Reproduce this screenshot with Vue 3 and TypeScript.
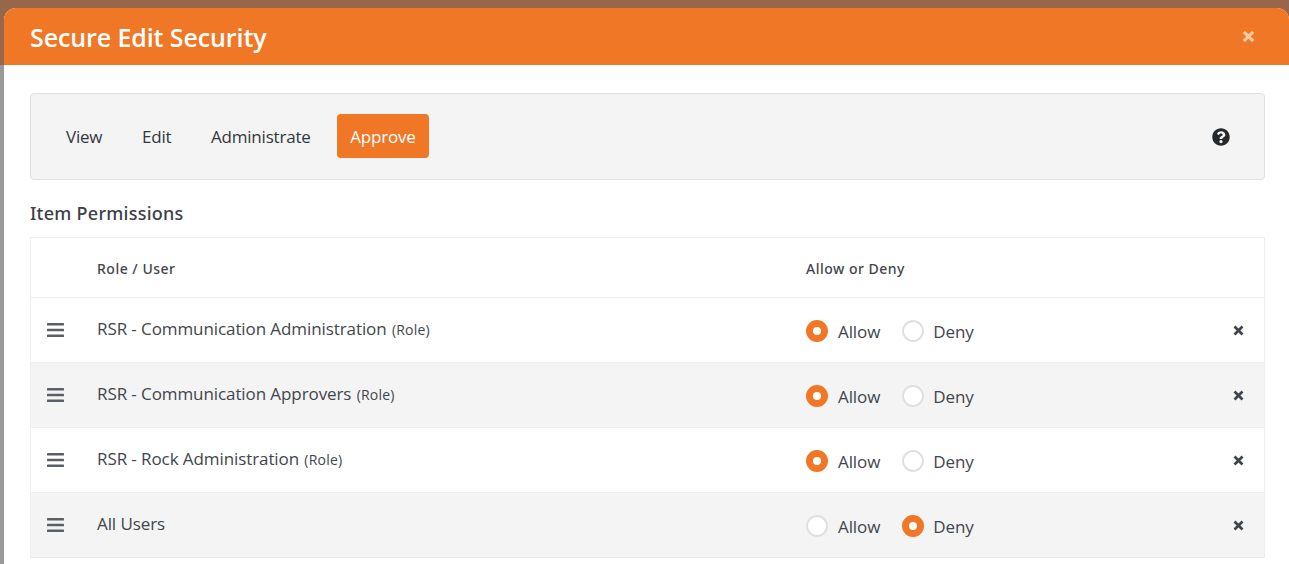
<script setup lang="ts">
interface Row { name: string; role: boolean; allow: boolean }
const rows: Row[] = [
  { name: 'RSR - Communication Administration', role: true, allow: true },
  { name: 'RSR - Communication Approvers', role: true, allow: true },
  { name: 'RSR - Rock Administration', role: true, allow: true },
  { name: 'All Users', role: false, allow: false },
]
const tabs = ['View', 'Edit', 'Administrate', 'Approve']
</script>

<template>
  <div class="page">
    <div class="modal">
      <header class="head">
        <h1>Secure Edit Security</h1>
        <svg class="close" viewBox="0 0 13 13" width="13" height="13">
          <path d="M1.800 1.800 11.200 11.200M11.200 1.800 1.800 11.200" stroke="#f9c9a6" stroke-width="3.200" fill="none" />
        </svg>
      </header>
      <div class="body">
        <div class="panel">
          <nav class="tabs">
            <span v-for="t in tabs" :key="t" class="tab" :class="{ on: t === 'Approve' }">{{ t }}</span>
          </nav>
          <svg class="help" viewBox="0 0 512 512" width="18" height="18">
            <path fill="#24292e" d="M504 256c0 137-111 248-248 248S8 393 8 256 119 8 256 8s248 111 248 248zM262.700 90c-54.500 0-89.300 23-116.500 63.800-3.500 5.300-2.400 12.400 2.700 16.300l34.700 26.300c5.200 3.900 12.600 3 16.700-2.100 17.900-22.700 30.200-35.800 57.300-35.800 20.400 0 45.700 13.100 45.700 33 0 15-12.400 22.700-32.600 34-23.600 13.200-54.800 29.700-54.800 70.900V302c0 6.600 5.400 12 12 12h56c6.600 0 12-5.400 12-12v-1.300c0-28.600 83.500-29.800 83.500-107.200C380 135.200 319.500 90 262.700 90zM256 339c-25.400 0-46 20.600-46 46s20.600 46 46 46 46-20.600 46-46-20.600-46-46-46z"/>
          </svg>
        </div>
        <h2 class="title">Item Permissions</h2>
        <div class="table">
          <div class="row hdr">
            <span class="grip-col"></span>
            <span class="name">Role / User</span>
            <span class="choice">Allow or Deny</span>
          </div>
          <div v-for="r in rows" :key="r.name" class="row item">
            <span class="grip-col">
              <svg class="grip" viewBox="0 0 17 14" width="17" height="14">
                <rect x="0" y="0" width="17" height="2.500" rx=".6" />
                <rect x="0" y="5.750" width="17" height="2.500" rx=".6" />
                <rect x="0" y="11.500" width="17" height="2.500" rx=".6" />
              </svg>
            </span>
            <span class="name">{{ r.name }} <small v-if="r.role">(Role)</small></span>
            <span class="choice radios">
              <span class="radio"><i :class="{ sel: r.allow }"></i>Allow</span>
              <span class="radio"><i :class="{ sel: !r.allow }"></i>Deny</span>
            </span>
            <svg class="del" viewBox="0 0 11 11" width="11" height="11">
              <path d="M1.500 1.500 9.500 9.500M9.500 1.500 1.500 9.500" stroke="#3f434a" stroke-width="2.700" fill="none" />
            </svg>
          </div>
        </div>
      </div>
    </div>
  </div>
</template>

<style>
html, body { margin: 0; overflow: hidden; }
</style>

<style scoped>
.page {
  width: 1289px;
  height: 564px;
  overflow: hidden;
  box-sizing: border-box;
  padding: 8px 0 0 4px;
  background: linear-gradient(#966849 0, #966849 65px, #999 65px);
  font-family: "Open Sans", "Noto Sans", sans-serif;
  color: #42464c;
}
.modal {
  height: 600px;
  background: #fff;
  border-radius: 12px 12px 0 0;
}
.head {
  height: 57px;
  box-sizing: border-box;
  background: #ef7726;
  border-radius: 12px 12px 0 0;
  display: flex;
  align-items: center;
  justify-content: space-between;
  padding: 0 34px 0 26px;
}
h1 {
  margin: 0;
  color: #fff;
  font-size: 25px;
  font-weight: 600;
  letter-spacing: -.1px;
}
.close { display: block; }
.body { padding: 28px 24px 0 26px; }
.panel {
  height: 87px;
  box-sizing: border-box;
  border: 1px solid #e0e0e0;
  border-radius: 4px;
  background: #f4f4f4;
  display: flex;
  align-items: center;
  justify-content: space-between;
  padding: 0 34px 1px 22px;
}
.tabs { display: flex; gap: 13.6px; }
.tab {
  height: 44px;
  line-height: 46px;
  padding: 0 13px;
  border-radius: 4px;
  font-size: 17px;
  letter-spacing: -.2px;
  color: #33373c;
}
.tab.on { background: #ef7726; color: #fff; }
.help { display: block; margin-top: 1px; }
.title {
  margin: 22px 0 12px;
  font-family: "Noto Sans", "Open Sans", sans-serif;
  font-size: 18px;
  line-height: 23px;
  font-weight: 500;
  letter-spacing: .25px;
  color: #3c4046;
}
.table {
  border: 1px solid #eeeeee;
  border-bottom-color: #e8e8e8;
}
.row {
  display: flex;
  align-items: center;
  position: relative;
}
.hdr {
  height: 60px;
  font-family: "Noto Sans", "Open Sans", sans-serif;
  font-size: 14px;
  font-weight: 500;
  letter-spacing: .5px;
  padding-top: 1px;
  border-bottom: 1px solid #eeeeee;
  box-sizing: border-box;
}
.item {
  height: 65px;
  box-sizing: border-box;
  border-bottom: 1px solid #eeeeee;
  font-size: 17px;
}
.item:last-child { border-bottom: 0; height: 64px; }
.item:nth-child(odd) { background: #f4f4f4; }
.grip-col { width: 66px; padding-left: 16px; box-sizing: border-box; display: flex; }
.grip { fill: #5b5f66; }
.name { width: 709px; letter-spacing: -.09px; }
.hdr .name { letter-spacing: .5px; }
.item .name { margin-top: -4px; }
small { font-size: 14px; letter-spacing: .2px; margin-left: 1px; }
.radios { display: flex; gap: 22px; font-size: 17px; letter-spacing: -.1px; margin-top: 2px; }
.radio { display: flex; align-items: center; }
.radio i {
  width: 22px;
  height: 22px;
  box-sizing: border-box;
  border-radius: 50%;
  border: 2px solid #e0e0e0;
  background: #fff;
  margin-right: 10px;
}
.radio + .radio i { margin-right: 9px; }
.radio i.sel { border: 7px solid #ef7726; }
.del { position: absolute; left: 1202px; top: 50%; margin-top: -5px; }
</style>
